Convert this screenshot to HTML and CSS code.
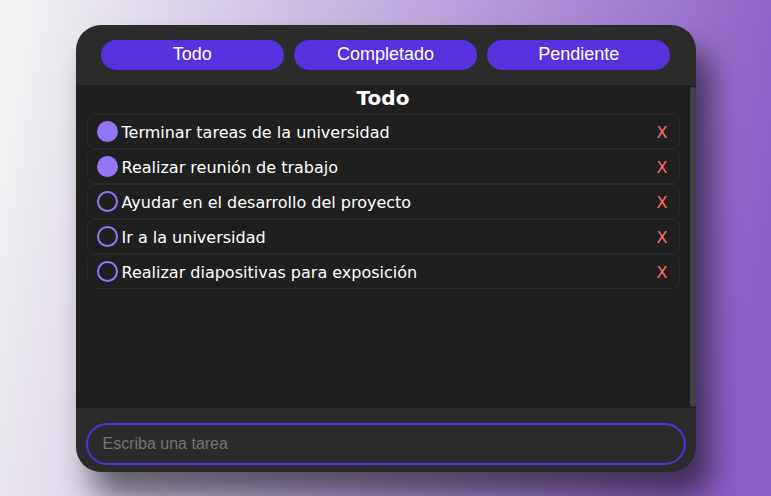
FILE: index.html
```html
<!DOCTYPE html>
<html lang="es">
<head>
<meta charset="utf-8">
<title>Todo</title>
<link rel="stylesheet" href="styles.css">
</head>
<body>
<div class="app">
  <div class="filters">
    <button class="filter">Todo</button>
    <button class="filter">Completado</button>
    <button class="filter">Pendiente</button>
  </div>
  <div class="list">
    <div class="list-inner">
      <h2 class="title">Todo</h2>
      <ul class="tasks">
        <li class="task"><span class="check done"></span><span class="label">Terminar tareas de la universidad</span><span class="del">X</span></li>
        <li class="task"><span class="check done"></span><span class="label">Realizar reunión de trabajo</span><span class="del">X</span></li>
        <li class="task"><span class="check"></span><span class="label">Ayudar en el desarrollo del proyecto</span><span class="del">X</span></li>
        <li class="task"><span class="check"></span><span class="label">Ir a la universidad</span><span class="del">X</span></li>
        <li class="task"><span class="check"></span><span class="label">Realizar diapositivas para exposición</span><span class="del">X</span></li>
      </ul>
    </div>
    <div class="scrollbar"></div>
  </div>
  <div class="footer">
    <input class="new-task" type="text" placeholder="Escriba una tarea">
  </div>
</div>
</body>
</html>
```
FILE: styles.css
```css
* { box-sizing: border-box; }
html, body { height: 100%; }
body {
  margin: 0;
  display: flex;
  align-items: center;
  justify-content: center;
  background: linear-gradient(100deg, #f1f0f2 4%, #8a5ec8 94%);
  font-family: "DejaVu Sans", Verdana, sans-serif;
}
.app {
  width: 620px;
  height: 447px;
  border-radius: 25px;
  overflow: hidden;
  background: #2b2b2b;
  display: flex;
  flex-direction: column;
  box-shadow: 15px 25px 30px rgba(0, 0, 0, 0.55);
}
.filters {
  display: flex;
  gap: 10px;
  padding: 15px 25px;
  height: 60px;
}
.filter {
  flex: 1;
  height: 30px;
  border: none;
  border-radius: 15px;
  background: #5631dd;
  color: #fff;
  font-family: "Liberation Sans", Arial, sans-serif;
  font-size: 18px;
  padding: 0;
}
.list {
  height: 323px;
  background: #1f1f1f;
  display: flex;
}
.list-inner {
  flex: 1;
  padding: 1px 10px 0 11px;
}
.scrollbar {
  width: 6px;
  margin: 2px 0 1px;
  border-radius: 3px;
  background: #434343;
}
.title {
  margin: 0 0 4px;
  text-align: center;
  color: #fff;
  font-size: 20px;
  line-height: 24px;
  font-weight: bold;
}
.tasks {
  list-style: none;
  margin: 0;
  padding: 0;
}
.task {
  height: 35px;
  display: flex;
  align-items: center;
  border: 1px solid #2a2a2a;
  border-radius: 8px;
  padding: 2px 11px 0 9px;
  color: #fff;
  font-size: 16px;
}
.check {
  width: 21px;
  height: 21px;
  border-radius: 50%;
  border: 2px solid #9575f7;
  flex: none;
  margin: -2px 4px 0 0;
}
.check.done { background: #9575f7; }
.label { flex: 1; }
.del {
  color: #ff6b6b;
  font-size: 16px;
}
.footer {
  flex: 1;
  padding: 15px 10px 0;
}
.new-task {
  width: 100%;
  height: 42px;
  border: 2px solid #5631dd;
  border-radius: 21px;
  background: #2b2b2b;
  color: #fff;
  padding: 0 15px;
  font-family: "Liberation Sans", Arial, sans-serif;
  font-size: 16px;
  outline: none;
}
.new-task::placeholder { color: #757575; }
```
